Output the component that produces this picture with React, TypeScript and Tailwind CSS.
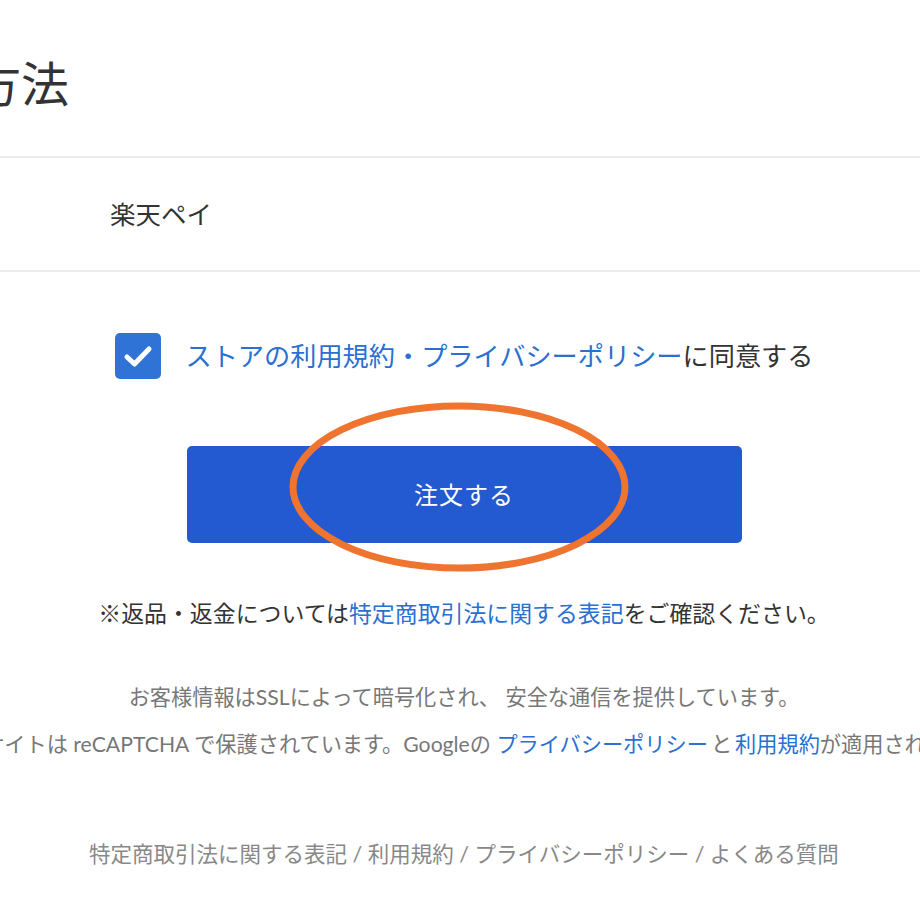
export default function App() {
  const font = { fontFamily: 'Lato, "Noto Sans CJK JP", sans-serif' };
  return (
    <div
      className="w-[920px] h-[920px] overflow-hidden bg-white flex justify-center"
      style={font}
    >
      <div className="w-[1400px] shrink-0 ml-[8px] flex flex-col">
        {/* Section title */}
        <h1 className="mt-[48px] pl-[17px] text-[48px] leading-[72px] text-[#333]">
          お支払い方法
        </h1>

        {/* Selected payment */}
        <div className="mt-[36px] border-y-2 border-[#ececec] h-[116px] flex items-center pl-[346px]">
          <span className="text-[25.5px] text-[#333]">楽天ペイ</span>
        </div>

        {/* Agreement */}
        <div className="mt-[61px] flex items-center justify-center gap-[25px]">
          <div className="w-[46px] h-[46px] rounded-[5px] bg-[#2f73d6] flex items-center justify-center">
            <svg width="46" height="46" viewBox="0 0 46 46" fill="none">
              <path
                d="M12 24 L19.5 31 L34 16"
                stroke="white"
                strokeWidth="5"
                strokeLinecap="round"
                strokeLinejoin="round"
              />
            </svg>
          </div>
          <p className="text-[26.2px] leading-[46px] text-[#333]">
            <span className="text-[#2a6fd2]">ストアの利用規約・プライバシーポリシー</span>
            に同意する
          </p>
        </div>

        {/* Order button */}
        <div className="mt-[67px] flex justify-center">
          <div className="relative">
            <button className="w-[555px] h-[97px] rounded-[5px] bg-[#2359d1] text-white text-[24px] tracking-[1px]">
              注文する
            </button>
            <svg
              className="absolute left-[101px] top-[-45px] pointer-events-none"
              width="342"
              height="172"
              viewBox="0 0 342 172"
              fill="none"
            >
              <ellipse
                cx="171"
                cy="86"
                rx="166"
                ry="81"
                stroke="#ee7430"
                strokeWidth="7"
              />
            </svg>
          </div>
        </div>

        {/* Returns notice */}
        <p className="mt-[53px] text-center text-[22.9px] leading-[34px] text-[#333]">
          ※返品・返金については
          <span className="text-[#2a6fd2]">特定商取引法に関する表記</span>
          をご確認ください。
        </p>

        {/* Security notes */}
        <p className="mt-[52px] text-center text-[21.2px] leading-[31px] text-[#777]">
          お客様情報はSSLによって暗号化され、 安全な通信を提供しています。
        </p>
        <p className="mt-[16px] text-center text-[21.2px] leading-[31px] text-[#777]">
          このサイトは reCAPTCHA で保護されています。Googleの{' '}
          <span className="text-[#2a6fd2]">プライバシーポリシー</span>
          <span className="mx-[3px]">と</span>
          <span className="text-[#2a6fd2]">利用規約</span>が適用されます。
        </p>

        {/* Footer links */}
        <p className="mt-[78px] text-center text-[21.5px] leading-[32px] text-[#888]">
          特定商取引法に関する表記 / 利用規約 / プライバシーポリシー / よくある質問
        </p>
      </div>
    </div>
  );
}
